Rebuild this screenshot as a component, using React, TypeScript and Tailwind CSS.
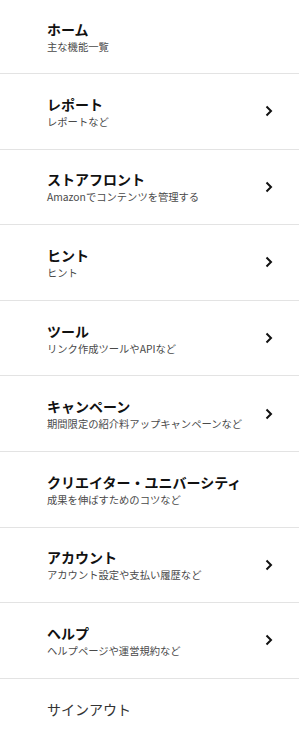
import React from "react";

const items: { title: string; sub: string; chevron: boolean }[] = [
  { title: "ホーム", sub: "主な機能一覧", chevron: false },
  { title: "レポート", sub: "レポートなど", chevron: true },
  { title: "ストアフロント", sub: "Amazonでコンテンツを管理する", chevron: true },
  { title: "ヒント", sub: "ヒント", chevron: true },
  { title: "ツール", sub: "リンク作成ツールやAPIなど", chevron: true },
  { title: "キャンペーン", sub: "期間限定の紹介料アップキャンペーンなど", chevron: true },
  { title: "クリエイター・ユニバーシティ", sub: "成果を伸ばすためのコツなど", chevron: false },
  { title: "アカウント", sub: "アカウント設定や支払い履歴など", chevron: true },
  { title: "ヘルプ", sub: "ヘルプページや運営規約など", chevron: true },
];

function Chevron() {
  return (
    <svg width="8" height="12" viewBox="0 0 8 12" className="shrink-0">
      <path d="M1.5 1.5 L6 6 L1.5 10.5" fill="none" stroke="#111" strokeWidth="2" />
    </svg>
  );
}

export default function App() {
  return (
    <div
      className="w-[299px] h-[730px] bg-white overflow-hidden"
      style={{ fontFamily: '"Noto Sans CJK JP", "Noto Sans", sans-serif' }}
    >
      {items.map((it, i) => (
        <div
          key={i}
          className={`flex items-center pl-[47px] pr-[26px] border-b border-[#e3e3e3] ${i === 0 ? "h-[74px]" : "h-[75.6px]"}`}
        >
          <div className="flex-1 flex flex-col">
            <div className="text-[14px] leading-[20px] font-bold text-[#111]">{it.title}</div>
            <div className="text-[10.3px] leading-[15px] text-[#4a4a4a]">{it.sub}</div>
          </div>
          {it.chevron && <Chevron />}
        </div>
      ))}
      <div className="pl-[47px] pt-[20px] text-[14px] leading-[20px] text-[#333]">サインアウト</div>
    </div>
  );
}
